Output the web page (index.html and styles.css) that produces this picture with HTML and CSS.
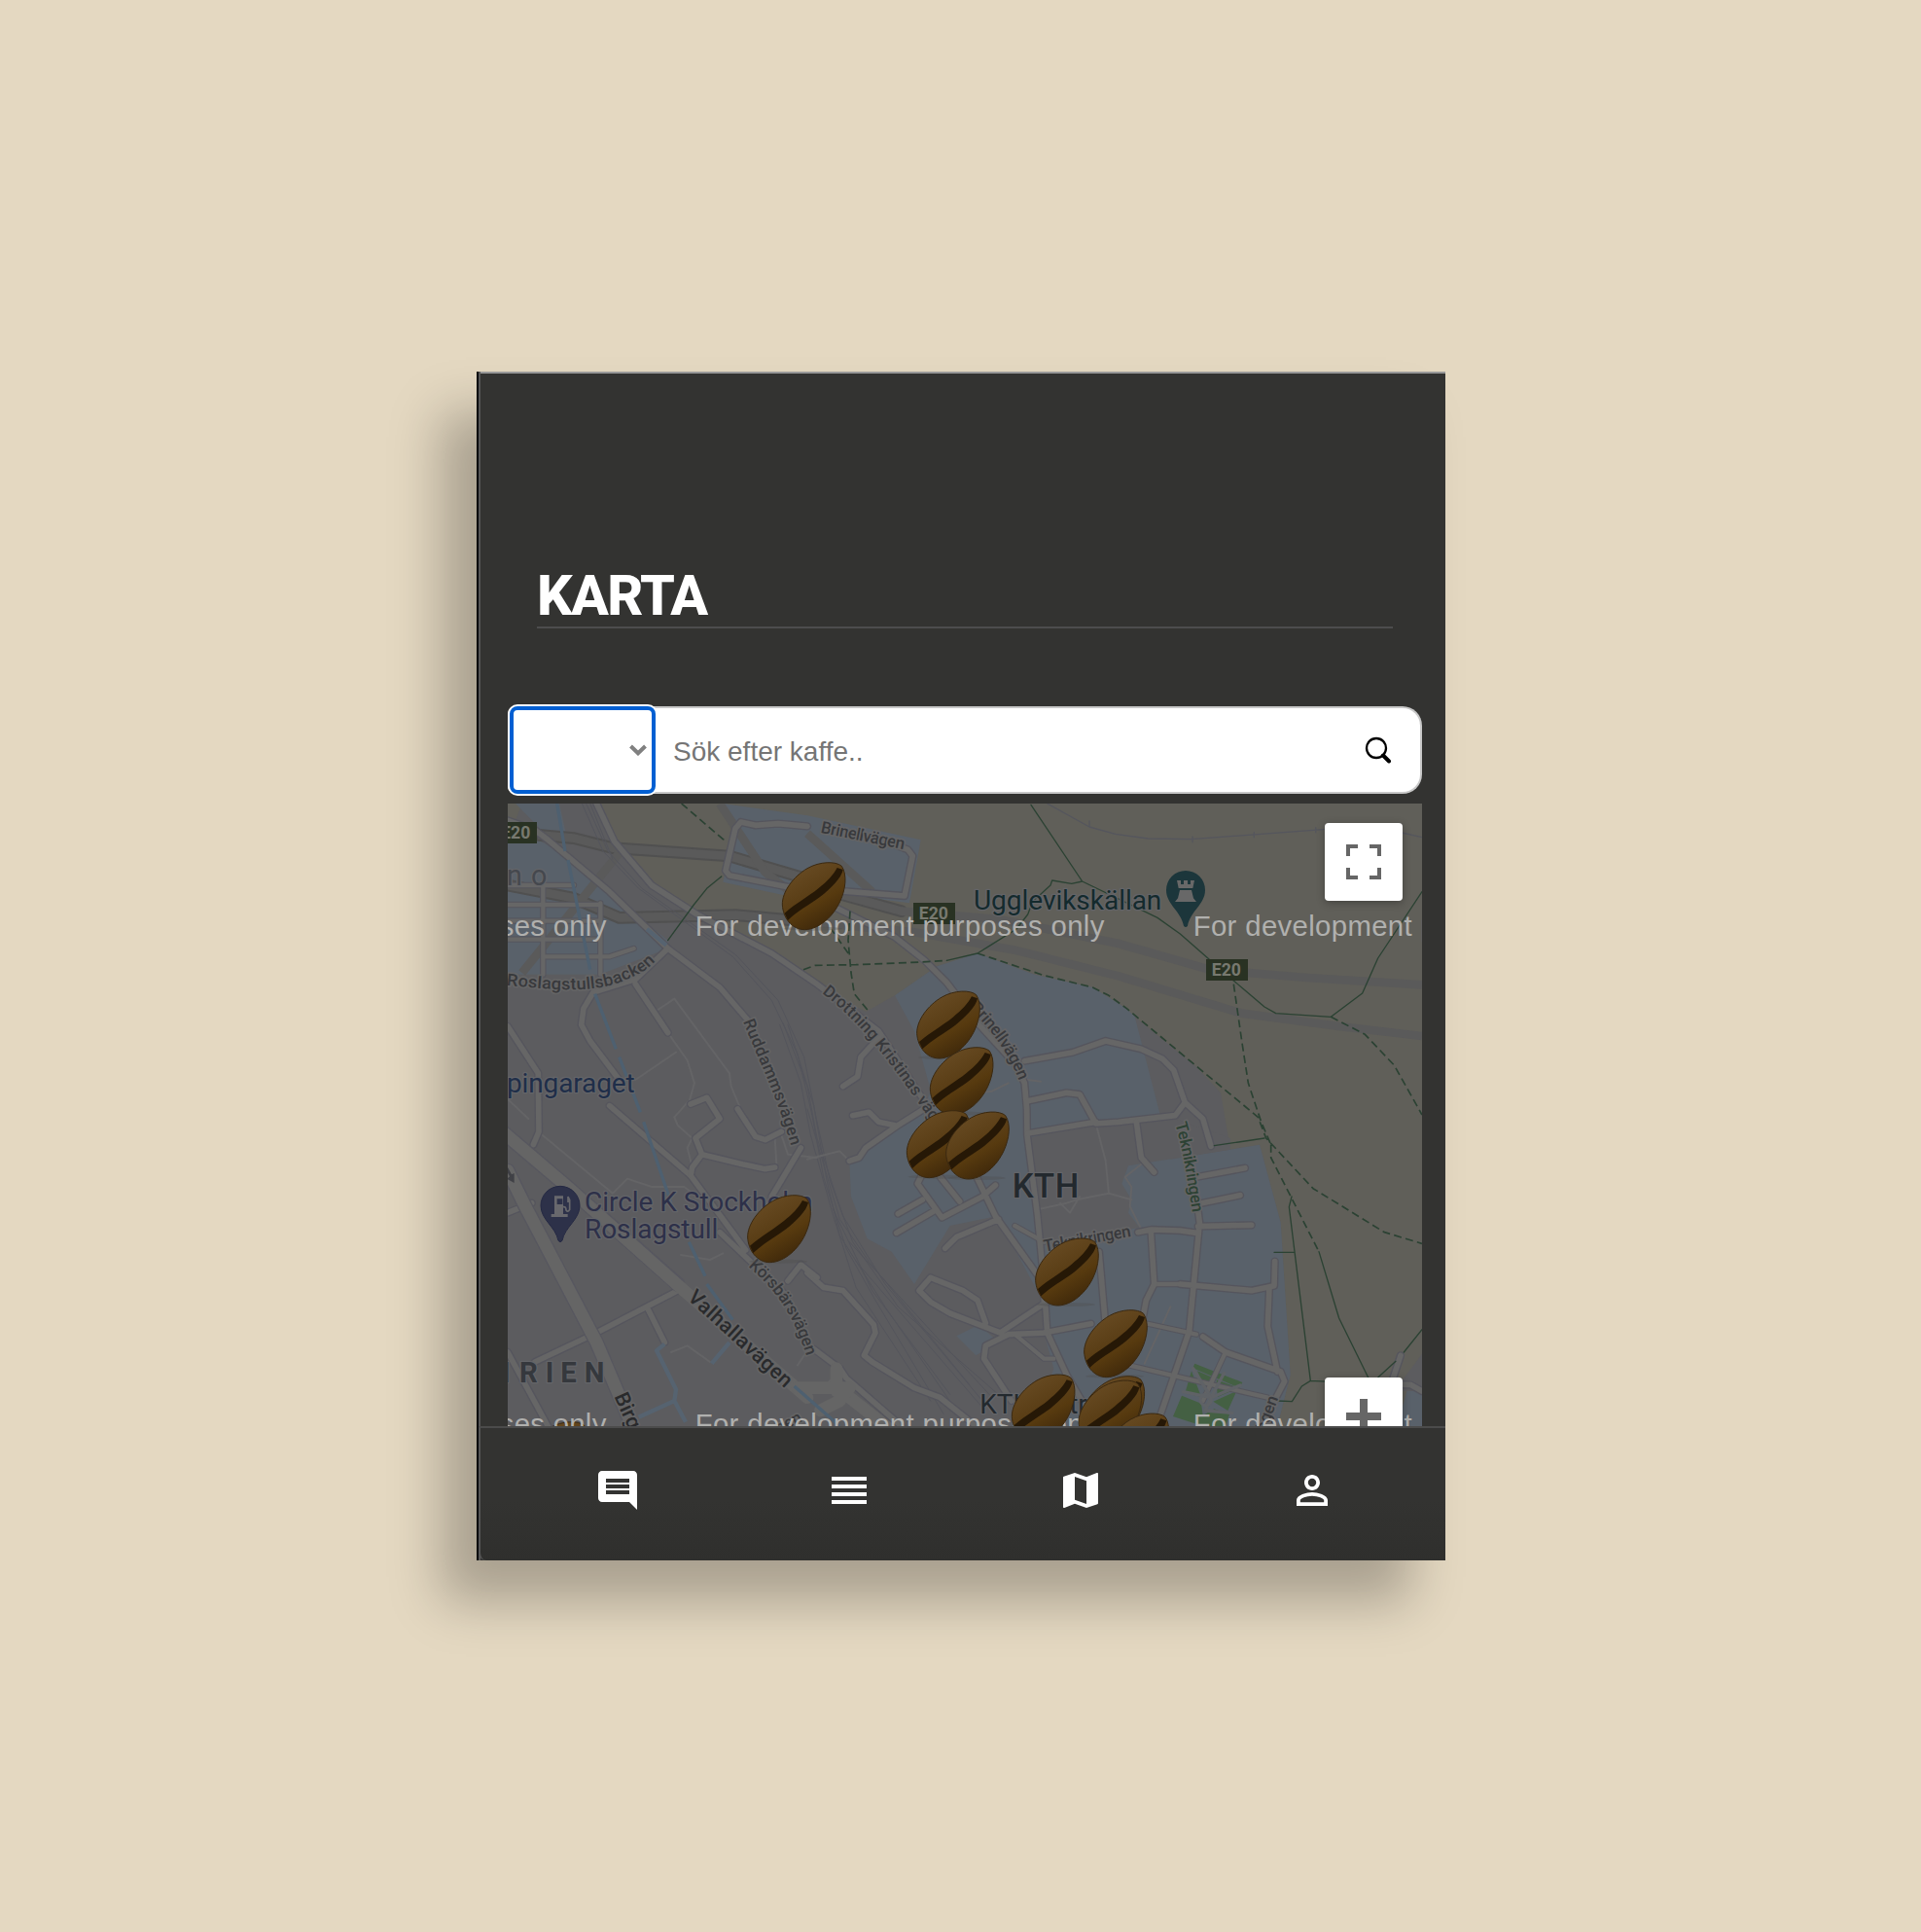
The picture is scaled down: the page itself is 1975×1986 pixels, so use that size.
FILE: index.html
```html
<!DOCTYPE html>
<html lang="sv">
<head>
<meta charset="utf-8">
<title>Karta</title>
<link rel="stylesheet" href="styles.css">
</head>
<body>
<main class="app">
  <header class="head"><h1 class="title">KARTA</h1></header>
  <form class="search">
    <button type="button" class="filter" aria-label="Filter"><svg width="18" height="12" viewBox="0 0 18 12"><path d="M1.5 2 9 9.3 16.500 2" fill="none" stroke="#808080" stroke-width="4"/></svg></button>
    <input class="query" type="text" placeholder="Sök efter kaffe..">
    <svg class="lens" width="28" height="28" viewBox="0 0 28 28"><circle cx="12" cy="12" r="10" fill="none" stroke="#000" stroke-width="2.300"/><path d="M19 19.500 25 25.500" stroke="#000" stroke-width="4" stroke-linecap="round"/></svg>
  </form>
  <section class="map">
    <svg class="canvas" viewBox="36 18 2820 1920">
      <defs>
        <linearGradient id="shell" x1=".25" y1=".1" x2=".7" y2=".95"><stop offset="0" stop-color="#674a22"/><stop offset=".45" stop-color="#5a3e16"/><stop offset=".6" stop-color="#573a0f"/><stop offset="1" stop-color="#3d270a"/></linearGradient>
        <g id="bean">
          <ellipse cx="95" cy="206" rx="90" ry="6" fill="#4c4c4c" opacity=".35"/>
          <path d="M184 13C166-3 116-2 78 20C35 45 0 92 1 132C3 172 30 209 70 209C115 208 158 168 179 122C196 85 202 40 184 13Z" fill="url(#shell)" stroke="#3a2810" stroke-width="3"/>
          <path d="M8 158C45 126 80 108 112 82C140 60 158 40 170 18L188 24C184 50 147 84 120 106C84 132 48 152 18 180Z" fill="#261806"/>
        </g>
        <g id="wide">
          <path d="M36 70 120 100 160 130 350 290 530 465 690 585 780 690M310 18 365 135 480 270 620 360 850 480 990 575 1030 605 1180 720 1330 950"/>
          <path d="M1010 320 1230 430 1320 500 1390 570 1490 700 1600 820 1630 880 1637 960 1638 1040 1670 1290 1690 1500 1700 1650 1760 1780 1830 1900"/>
          <path d="M530 465 430 560 300 600 270 650 263 700 290 750 380 870M430 575 530 725M36 705 130 850 132 1030 115 1070"/>
          <path d="M960 88 870 80 800 85 755 75 738 95 708 225 720 240 900 275 1260 303 1285 180 1270 160 1230 145"/>
          <path d="M1630 812 1780 785 1880 750 1990 775 2055 805 2090 840 2125 940 2180 990 2205 1075M1640 935 1760 910 1800 915 1850 1005 1920 1000 2095 980 2125 940M1640 1035 1850 1000"/>
          <path d="M2160 1235 2170 1310 2138 1645M2160 1170 2310 1142M2170 1252 2295 1226M2165 1322 2330 1318M1980 1340 2020 1332 2110 1335 2160 1342M2020 1340 2030 1500 2005 1550 1990 1630M2110 1500 2330 1520 2400 1505 2402 1430M2385 1510 2380 1630 2410 1770M2180 1662 2250 1710 2420 1770 2432 1800 2390 1880M2138 1645 2040 1930"/>
          <path d="M960 1465 1010 1510 1070 1520 1165 1625 1170 1650 1135 1720 1160 1740 1290 1820 1370 1850 1480 1938M1480 1165 1540 1290 1690 1500 1690 1560 1555 1650 1400 1590 1340 1555 1305 1520 1340 1480 1440 1520 1485 1550 1510 1620M1550 1300 1420 1355 1385 1390M1860 1400 1880 1630M1690 1650 1835 1622M1700 1650 1580 1655 1510 1690 1505 1730 1590 1860M1310 1170 1300 1190 1375 1295 1500 1230 1540 1195M1315 1240 1240 1283M1350 1275 1235 1342M1370 1170 1430 1245"/>
          <path d="M350 950 600 1165 770 1395M690 1340 900 1540M120 1740 310 1650 560 1520M470 1580 520 1680M36 1280 110 1250M36 1710 160 1938"/>
          <path d="M600 1165 605 1140 635 1100M635 1100 760 1130 830 1145 860 1140M635 1100 615 1050 690 990 650 925 600 945M745 960 800 1045 830 1055 880 1030M940 1080 850 1230M900 1490 940 1440 990 1480M1070 890 1115 860 1125 800 1180 740M1100 980 1150 970 1180 1000 1230 1010M1090 1120 1120 1110 1140 1080 1240 1010 1320 960M980 1700 1060 1760 1080 1790 1250 1938"/>
          <path d="M2760 1810 2790 1720M2760 1810 2820 1810 2856 1830M1975 1000 1990 1110 2030 1155"/>
        </g>
        <g id="lanes">
          <path d="M36 270H240M36 330H320M36 380H320M36 437H320M145 270V545M322 325V545M150 490H350L425 465M1600 1320 1690 1370M1600 1655 1690 1730 1720 1730M1930 1745 2080 1780 2380 1850M2250 1710 2180 1860M2030 1500 2110 1500M2000 1620 2160 1655"/>
        </g>
        <g id="thin">
          <path d="M490 660 550 620 720 850 725 890 750 950M530 725 590 810 612 880 595 940M555 785 430 870M130 1030 360 1220 405 1175 480 1200 580 1200 620 1230M570 1410 660 1425 700 1405M605 1050 590 1080 605 1140M860 1050 865 1130M880 1040 900 1100 990 1110M36 930 100 990M550 985 590 940M550 985 560 1010 605 1050M540 1710 590 1690 660 1740M1820 960 1850 1005 1880 1120 1890 1220 1960 1240M1670 1270 1760 1250 1790 1240 1890 1220M1740 1250 1770 1280 1800 1230M930 1750 950 1720M1640 870 1680 875M1490 910 1530 905 1580 880M960 1115 1060 1090 1090 1120M2000 1745 2080 1570M1990 1130 1940 1170 1960 1200 1955 1260 1990 1330"/>
        </g>
        <path id="roslag" d="M32 578C150 590 300 608 400 562C450 540 470 530 505 488"/>
        <path id="rudd" d="M762 690C800 790 860 900 912 1080"/>
        <path id="drott" d="M1005 602C1120 690 1200 790 1350 1010"/>
        <path id="brin" d="M1462 650C1520 710 1580 780 1618 885"/>
        <path id="kors" d="M778 1445C850 1510 910 1570 960 1730"/>
        <path id="valh" d="M588 1545 900 1830"/>
        <path id="tekn" d="M2095 1005C2120 1090 2135 1200 2150 1290"/>
      </defs>
      <rect x="36" y="18" width="2820" height="1920" fill="#5c5c5f"/>
      <path class="park" d="M325 18 370 130 480 270 620 360 850 480 990 575 1140 660 1230 610 1360 520 1485 480 1660 545 1840 585 1970 675 2160 830 2235 910 2265 1085 2355 1070 2420 1310 2450 1780 2410 1938H2856V18ZM36 18H80L60 70 36 60Z"/>
      <path class="zone" d="M1230 610 1360 520 1485 480 1660 545 1840 585 1945 650 1970 675 2050 985 2080 1115 2355 1070 2420 1310 2450 1780 2410 1938H1660L1720 1760 1690 1650 1690 1560 1545 1290 1400 1320 1290 1500 1220 1400 1145 1360 1095 1230 1090 1125 1320 965 1340 900 1290 720Z"/>
      <path class="zone" d="M700 18 960 55 1310 130 1275 325 1080 300 930 310 700 260 740 80ZM36 70 180 160 300 255 530 440 530 465 320 545H36ZM60 18H195L220 130 170 130ZM1420 1660 1490 1625 1550 1680 1480 1720ZM2780 1938 2820 1790 2856 1760V1938Z"/>
      <path class="ground" d="M1640 1050 1850 1000 2050 975 2265 1050V1085L1950 1135 1930 1190 1960 1240 1950 1280 1985 1325 1860 1350 1690 1380 1665 1270ZM2770 1830 2856 1715V1830Z"/>
      <path class="lawn" d="M2155 1745 2302 1803 2292 1820 2149 1759ZM2145 1768 2175 1848 2125 1836ZM2163 1768 2210 1788 2190 1838ZM2115 1844 2175 1868 2180 1905 2215 1885 2262 1902 2250 1938H2180L2088 1908ZM2222 1795 2290 1820 2225 1848ZM2212 1862 2284 1830 2257 1890Z"/>
      <g class="highway"><path d="M130 115 240 125 360 155 720 180 940 245 1070 300 1250 350"/><path d="M36 270 240 310 380 370 740 362 940 380"/></g>
      <g class="highway-fill"><path d="M130 115 240 125 360 155 720 180 940 245 1070 300 1250 350 1550 375 1920 450 2200 530 2500 555 2856 577"/><path d="M36 270 240 310 380 370 740 362 940 380 1290 415 1600 470 1920 550 2300 665 2600 705 2856 735M80 540 380 170M690 18 830 230 920 300M960 110 1160 290"/></g>
      <g class="rail"><path d="M265 18 330 165 440 280 730 490 850 625 930 790 975 980 1010 1170 1080 1390 1170 1550 1380 1900M278 18 345 165 450 280 740 485 870 625 950 800 990 1000 1030 1180 1100 1370 1240 1570 1560 1850M290 18 360 190M875 700 940 880 970 1040 1040 1290 1110 1510 1340 1860M885 695 960 890 990 1050 1070 1290 1200 1500 1500 1860M900 700 980 950 1020 1180 1060 1350 1200 1570 1420 1890M960 960 1060 1300 1150 1430 1460 1810M1040 1270 1160 1520 1400 1840M1110 1430 1500 1880M1090 1370 1530 1850"/></g>
      <path class="border" d="M1700 18 1830 90 1910 112 2010 126 2145 128 2520 100 2660 90 2780 105 2856 122M1830 72V90M2148 120V137M2338 107V122M2528 92V107"/>
      <use href="#thin" class="lane-case"/><use href="#lanes" class="road-case small"/><use href="#wide" class="road-case"/>
      <use href="#lanes" class="road small"/><use href="#wide" class="road"/>
      <path class="avenue-case" d="M20 1030 220 1200 560 1500M36 1150 90 1260 310 1680 420 1938"/>
      <path class="avenue" d="M20 1030 220 1200 580 1520 960 1850M1040 1810 1230 1960M36 1150 90 1260 310 1680 420 1938"/>
      <path class="avenue" d="M930 1820H1090L1060 1860 1000 1890M1050 1760V1830"/>
      <path class="lane-case pond" d="M2150 1760 2205 1850 2120 1832M2245 1775 2205 1850 2295 1812M2205 1850 2187 1890 2270 1897"/>
      <circle cx="2189" cy="1857" r="17" fill="none" stroke="#5f6266" stroke-width="9"/>
      <path class="water" d="M188 18 213 165M222 192 290 530M305 605 370 775M380 800 445 970M455 1000 540 1250M595 1370 645 1475M650 1500 730 1610M920 1815 1060 1938"/>
      <path class="water faint" d="M520 1685 495 1705 555 1825 550 1860 440 1910M550 1860 585 1925M720 1680 665 1745M465 405 525 455"/>
      <path class="trail" d="M695 243 650 280 610 330 530 440M1390 502 1485 480 1605 405 1640 360 1655 320 1710 270 1715 255 1775 265 1808 258 2040 370 2110 420 2270 560 2370 645 2405 665 2575 676 2672 603 2720 495 2856 290M1650 22 1808 258M2215 1073 2370 1050M2454 1230 2446 1262 2512 1798 2590 1802M2400 1402H2460M2538 1400 2600 1605 2690 1788M2720 1788 2775 1738M2800 1710 2856 1640M2410 1860 2455 1862 2485 1815 2512 1798"/>
      <path class="trail dashed" d="M572 18 700 128 715 132M948 530 985 517 1110 515 1310 507 1390 502M1092 350 1086 440 1095 540 1105 605 1150 660M1030 400 1090 485M1485 480 1690 548 1840 585 1890 610 1945 650 2350 985 2375 1050 2520 1205 2740 1340 2856 1375M2275 575 2300 750 2320 880 2360 1000 2390 1070M2390 1070V1110L2538 1400M2575 676 2680 730 2770 825 2856 978"/>
      <path d="M36 1140 48 1162 56 1158V1188L34 1176 42 1168 34 1154Z" fill="#404146"/>

      <g class="street">
        <text><textPath href="#roslag" textLength="482" lengthAdjust="spacingAndGlyphs">Roslagstullsbacken</textPath></text>
        <text><textPath href="#rudd" textLength="412">Ruddammsvägen</textPath></text>
        <text><textPath href="#drott" textLength="525">Drottning Kristinas väg</textPath></text>
        <text><textPath href="#brin" textLength="272">Brinellvägen</textPath></text>
        <text><textPath href="#kors" textLength="335">Körsbärsvägen</textPath></text>
        <text transform="translate(1000 107) rotate(11.500)" textLength="262">Brinellvägen</text>
        <text class="moss"><textPath href="#tekn" textLength="280">Teknikringen</textPath></text>
        <text transform="translate(1692 1400) rotate(-10)" textLength="272">Teknikringen</text>
        <text transform="translate(2366 1980) rotate(-70)">vägen</text>
        <text transform="translate(848 1974) rotate(-28)">ägen</text>
        <text class="main"><textPath href="#valh" textLength="410">Valhallavägen</textPath></text>
        <text class="main" transform="translate(364 1846) rotate(66)">Birger</text>
      </g>
      <g class="shield"><rect x="0" y="75" width="126" height="66"/><rect x="1287" y="324" width="129" height="66"/><rect x="2190" y="498" width="129" height="66"/>
        <text x="15" y="127" textLength="91">E20</text><text x="1304" y="376" textLength="91">E20</text><text x="2207" y="550" textLength="91">E20</text></g>
      <text x="33 108" y="270" class="place" font-size="86" fill="#45484e">no</text>
      <text x="33" y="908" class="place" font-size="84" fill="#1f2e49" textLength="395">pingaraget</text>
      <text x="273" y="1274" class="place" font-size="84" fill="#2d3049" textLength="704">Circle K Stockholm</text>
      <text x="273" y="1358" class="place" font-size="84" fill="#2d3049" textLength="412">Roslagstull</text>
      <text x="1473" y="345" class="place" font-size="84" fill="#142a2d" textLength="580">Ugglevikskällan</text>
      <text x="1592" y="1233" class="place" font-size="104" font-weight="500" fill="#23292e" textLength="206">KTH</text>
      <text x="1492" y="1900" class="place" font-size="84" fill="#23292e" textLength="375">KTH Entré</text>
      <text x="18 72 152 199 272" y="1804" class="place" font-size="88" font-weight="700" fill="#35383d">IRIEN</text>
      <g fill="#1c363b"><path d="M2127 225a60 60 0 0 1 60 60c0 44-46 65-54 110q-6 8-12 0c-8-45-54-66-54-110a60 60 0 0 1 60-60Z"/><path fill="#686868" d="M2100 255h12v12h9v-12h12v12h9v-12h12l-5 24h-44ZM2109 285h36l6 25 9 11h-66l9-11Z"/></g>
      <g fill="#2d3149"><path stroke="#252943" stroke-width="3" d="M198 1198a60 60 0 0 1 60 60c0 44-46 65-54 108q-6 8-12 0c-8-43-54-64-54-108a60 60 0 0 1 60-60Z"/><path fill="#68686d" fill-rule="evenodd" d="M180 1228h27v56h14v9h-51v-9h10ZM188 1237v17h17v-17Z"/><path fill="none" stroke="#68686d" stroke-width="5" d="M207 1262Q216 1260 216 1272 222 1280 227 1270V1240L222 1230V1248"/></g>

      <use href="#bean" x="88" y="1923"/>
      <g class="notice">
        <text x="-916" y="427" textLength="1256">For development purposes only</text><text x="614" y="427" textLength="1262">For development purposes only</text><text x="2150" y="427" textLength="1262">For development purposes only</text>
        <text x="-916" y="1963" textLength="1256">For development purposes only</text><text x="614" y="1963" textLength="1262">For development purposes only</text><text x="2150" y="1963" textLength="1262">For development purposes only</text>
      </g>
      <use href="#bean" x="882" y="198"/>
      <use href="#bean" x="1297" y="595"/><use href="#bean" x="1338" y="768"/>
      <use href="#bean" x="1266" y="963"/><use href="#bean" x="1387" y="967"/>
      <use href="#bean" x="775" y="1224"/><use href="#bean" x="1663" y="1357"/>
      <use href="#bean" x="1813" y="1578"/><use href="#bean" x="1590" y="1777"/>
      <use href="#bean" x="1805" y="1782"/><use href="#bean" x="1796" y="1795"/>
      <use href="#bean" x="1880" y="1897"/>
    </svg>
    <button type="button" class="control full" aria-label="Helskärm"><svg width="36" height="36" viewBox="0 0 36 36"><path d="M12 2H2V12M24 2H34V12M34 24V34H24M12 34H2V24" fill="none" stroke="#666" stroke-width="4"/></svg></button>
    <button type="button" class="control plus" aria-label="Zooma in"><svg width="36" height="36" viewBox="0 0 36 36"><path d="M18 0V36M0 18H36" stroke="#666" stroke-width="8"/></svg></button>
  </section>
  <nav class="tabs">
    <a class="tab"><svg viewBox="0 0 24 24"><path d="M21.990 4c0-1.100-.89-2-1.990-2H4c-1.100 0-2 .9-2 2v12c0 1.100.9 2 2 2h14l4 4-.01-18zM18 14H6v-2h12v2zm0-3H6V9h12v2zm0-3H6V6h12v2z"/></svg></a>
    <a class="tab"><svg viewBox="0 0 24 24"><path d="M3 15h18v-2H3v2zm0 4h18v-2H3v2zm0-8h18V9H3v2zm0-6v2h18V5H3z"/></svg></a>
    <a class="tab"><svg viewBox="0 0 24 24"><path d="M20.500 3l-.16.03L15 5.100 9 3 3.360 4.900c-.21.07-.36.25-.36.480V20.500c0 .28.220.5.500.5l.16-.03L9 18.900l6 2.100 5.640-1.900c.21-.07.36-.25.36-.48V3.500c0-.28-.22-.5-.5-.5zM15 19l-6-2.110V5l6 2.110V19z"/></svg></a>
    <a class="tab"><svg viewBox="0 0 24 24"><path d="M12 5.900a2.100 2.100 0 1 1 0 4.200 2.100 2.100 0 0 1 0-4.200m0 9c2.970 0 6.100 1.460 6.100 2.100v1.100H5.900V17c0-.64 3.130-2.100 6.100-2.100M12 4C9.790 4 8 5.790 8 8s1.790 4 4 4 4-1.790 4-4-1.790-4-4-4zm0 9c-2.670 0-8 1.340-8 4v3h16v-3c0-2.660-5.330-4-8-4z"/></svg></a>
  </nav>
</main>
</body>
</html>
```

FILE: styles.css
```css
* { box-sizing: border-box; }
body {
  margin: 0;
  min-height: 1986px;
  padding: 382px 489px 382px 490px;
  background: #e4d8c1;
  font-family: Roboto, "Liberation Sans", sans-serif;
}
.app {
  width: 996px;
  height: 1222px;
  display: flex;
  flex-direction: column;
  background: #333331;
  border-left: 2px solid #02040c;
  box-shadow: inset 2px 0 #565656, inset 0 2px #989898, -36px 42px 50px rgba(0, 0, 0, .26);
}
.head {
  height: 264px;
  margin: 0 54px 0 60px;
  display: flex;
  align-items: flex-end;
  border-bottom: 2px solid #4d4d4d;
}
.title {
  margin: 0 0 -2px;
  color: #fff;
  font-size: 57.5px;
  line-height: 66px;
  font-weight: 800;
  letter-spacing: -1.7px;
}
.search {
  width: 940px;
  height: 90px;
  margin: 80px 0 10px 30px;
  display: flex;
  align-items: center;
  background: #fff;
  border: 2px solid #c8c8c8;
  border-left: 0;
  border-radius: 8px 20px 20px 8px;
}
.filter {
  width: 150px;
  height: 90px;
  margin-left: 2px;
  padding: 0 5px 0 0;
  display: flex;
  align-items: center;
  justify-content: flex-end;
  background: #fff;
  border: 4px solid #005fd2;
  border-radius: 8px;
  box-shadow: 0 0 0 2px #fff;
}
.query {
  flex: 1;
  min-width: 0;
  padding: 3px 18px 0;
  border: 0;
  background: transparent;
  font: 28px "Liberation Sans", Arial, sans-serif;
}
.query::placeholder { color: #757575; }
.lens { margin-right: 29px; }
.map {
  position: relative;
  width: 940px;
  height: 640px;
  margin-left: 30px;
  overflow: hidden;
}
.canvas { display: block; width: 940px; height: 640px; }
.control {
  position: absolute;
  right: 20px;
  width: 80px;
  height: 80px;
  padding: 0;
  display: grid;
  place-items: center;
  border: 0;
  border-radius: 4px;
  background: #fff;
  box-shadow: 0 2px 8px rgba(0, 0, 0, .3);
}
.full { top: 20px; }
.plus { top: 590px; }

.park { fill: #605f59; }
.zone { fill: #59616a; }
.ground { fill: #5c5c5f; }
.lawn { fill: #446043; }
.highway, .highway-fill, .rail, .border, .road, .road-case, .lane-case, .avenue, .avenue-case, .water, .trail { fill: none; stroke-linecap: round; stroke-linejoin: round; }
.highway { stroke: #505050; stroke-width: 38; }
.highway-fill { stroke: #5a5a5a; stroke-width: 26; stroke-linecap: butt; }
.rail { stroke: #54555c; stroke-width: 3; }
.border { stroke: #55565d; stroke-width: 4; }
.road-case { stroke: #55555d; stroke-width: 25; }
.road { stroke: #666; stroke-width: 17; }
.road-case.small { stroke-width: 19; }
.road.small { stroke-width: 13; }
.lane-case { stroke: #646466; stroke-width: 6; }
.pond { stroke: #5f6266; stroke-width: 10; }
.avenue-case { stroke: #57575f; stroke-width: 46; }
.avenue { stroke: #656565; stroke-width: 38; }
.water { stroke: #4e6070; stroke-width: 10; stroke-linecap: butt; }
.faint { stroke: #566370; stroke-width: 13; }
.trail { stroke: #2b4233; stroke-width: 4; }
.dashed { stroke-width: 5; stroke-dasharray: 24 13; stroke-linecap: butt; }
.street { font: 500 51px Roboto, sans-serif; fill: #38393c; stroke: #646465; stroke-width: 10; stroke-linejoin: round; paint-order: stroke; }
.moss { fill: #2d4234; }
.main { font-size: 64px; font-weight: 500; fill: #292a2c; }
.shield { font: 700 53px Roboto, sans-serif; fill: #293223; }
.shield text { fill: #77796f; }
.place { font-family: Roboto, sans-serif; stroke: #636468; stroke-width: 8; stroke-linejoin: round; paint-order: stroke; }
.notice { font: 88px "Liberation Sans", Arial, sans-serif; fill: #b0b0ae; }

.tabs {
  height: 138px;
  padding: 0 18px 8px 22px;
  display: flex;
  align-items: center;
  border-top: 2px solid #4b4b4b;
  border-left: 2px solid #565656;
  border-bottom-left-radius: 8px;
  background: linear-gradient(#333331 55%, #2f2f2d);
}
.tab { flex: 1; display: flex; justify-content: center; }
.tab svg { width: 48px; height: 48px; fill: #fff; }
```
